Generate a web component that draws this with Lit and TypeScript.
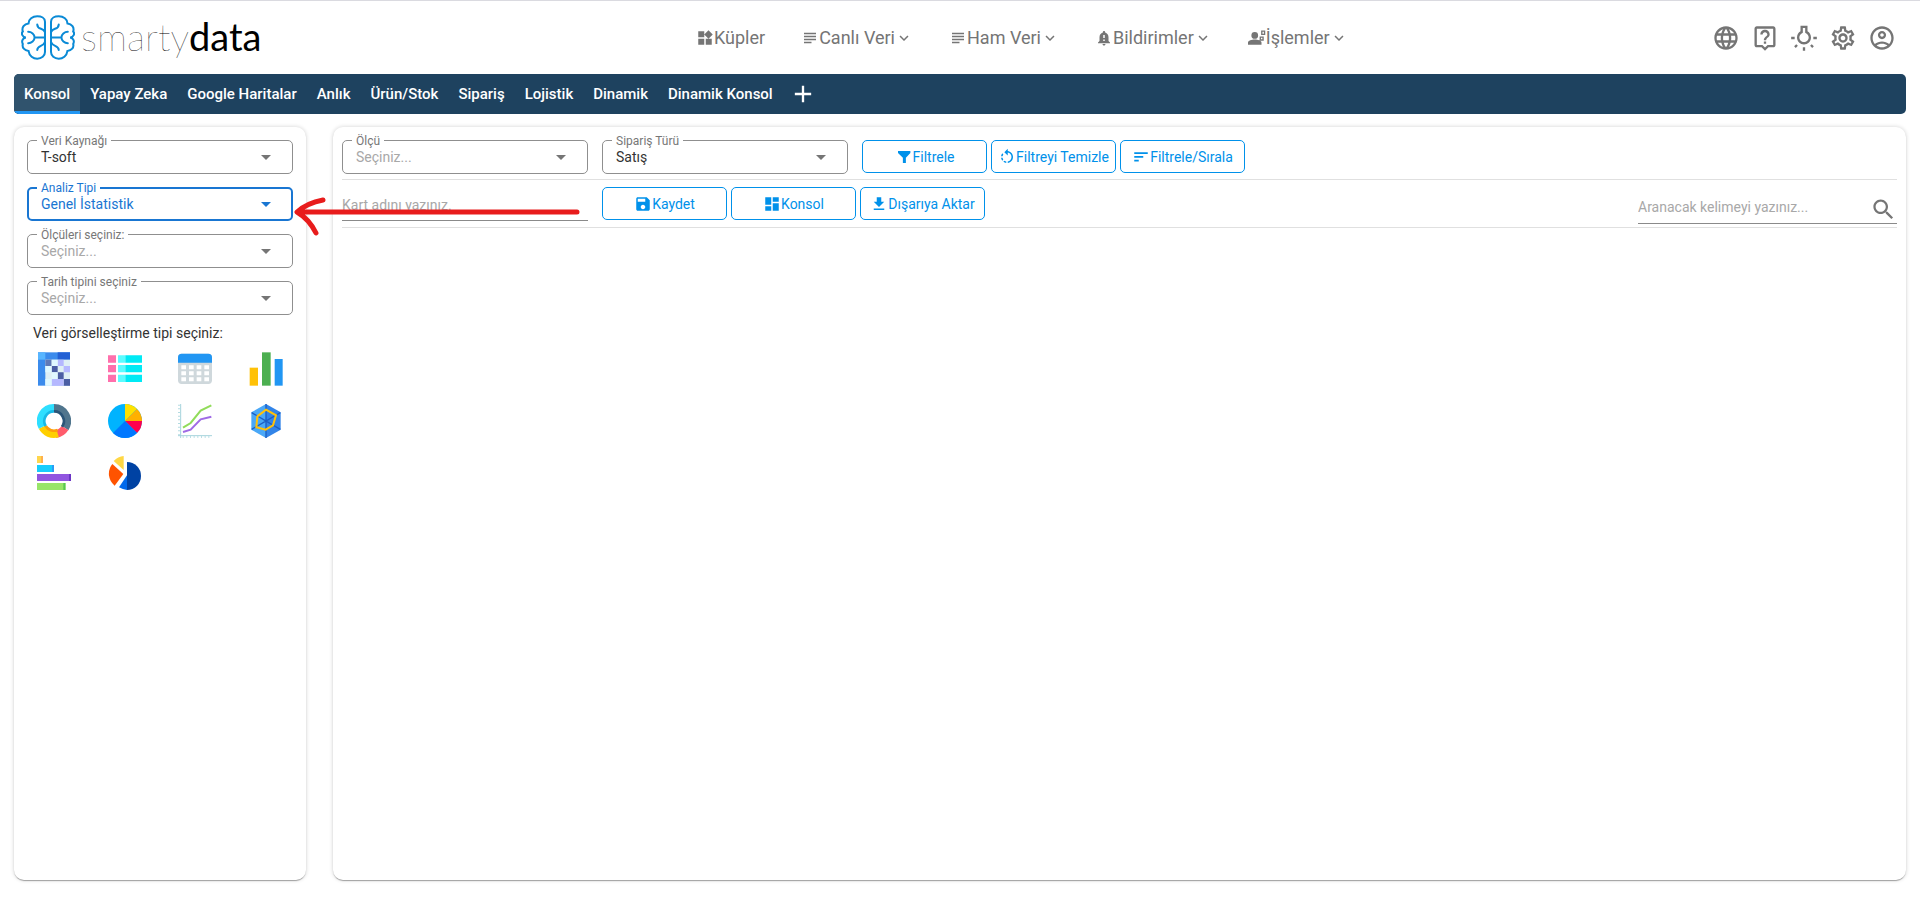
import { LitElement, html, css, svg, nothing } from "lit";
import { customElement, property, state } from "lit/decorators.js";
import { classMap } from "lit/directives/class-map.js";

const ICONS: Record<string, string> = {
  widgets: "M13 13v8h8v-8h-8zM3 21h8v-8H3v8zM3 3v8h8V3H3zm13.66-1.31L11 7.34 16.66 13l5.66-5.66-5.66-5.65z",
  subject: "M14 17H4v2h10v-2zm6-8H4v2h16V9zM4 15h16v-2H4v2zM4 5v2h16V5H4z",
  bell: "M18 16v-5c0-3.07-1.64-5.64-4.5-6.32V4c0-.83-.67-1.5-1.5-1.5s-1.5.67-1.5 1.5v.68C7.63 5.36 6 7.92 6 11v5l-2 2v1h16v-1l-2-2zm-5 0h-2v-2h2v2zm0-4h-2V8h2v4zm-1 10c1.1 0 2-.9 2-2h-4c0 1.1.89 2 2 2z",
  people: "M9 4a4.500 4.500 0 1 0 0 9 4.500 4.500 0 0 0 0-9zM0 21v-3c0-2.500 5-4 9-4s9 1.500 9 4v3zM17.500 2H23v6h-5.500zm1.800 1.800v2.400h1.900V3.800zM15.500 10H21v5.500h-5.500zm1.800 1.800v1.900h1.900v-1.900z",
  chevron: "M7.41 8.59L12 13.17l4.59-4.58L18 10l-6 6-6-6z",
  globe: "M11.99 2C6.47 2 2 6.48 2 12s4.47 10 9.99 10C17.52 22 22 17.52 22 12S17.52 2 11.99 2zm6.93 6h-2.95c-.32-1.25-.78-2.45-1.38-3.56 1.84.63 3.37 1.91 4.33 3.56zM12 4.04c.83 1.2 1.48 2.53 1.91 3.96h-3.82c.43-1.43 1.08-2.76 1.91-3.96zM4.26 14C4.1 13.36 4 12.69 4 12s.1-1.36.26-2h3.38c-.08.66-.14 1.32-.14 2 0 .68.06 1.34.14 2H4.26zm.82 2h2.95c.32 1.25.78 2.45 1.38 3.56-1.84-.63-3.37-1.9-4.33-3.56zm2.95-8H5.08c.96-1.66 2.49-2.93 4.33-3.56C8.81 5.55 8.35 6.75 8.03 8zM12 19.96c-.83-1.2-1.48-2.53-1.91-3.96h3.82c-.43 1.43-1.08 2.76-1.91 3.96zM14.34 14H9.66c-.09-.66-.16-1.32-.16-2 0-.68.07-1.35.16-2h4.68c.09.65.16 1.32.16 2 0 .68-.07 1.34-.16 2zm.25 5.56c.6-1.11 1.06-2.31 1.38-3.56h2.95c-.96 1.65-2.49 2.93-4.33 3.56zM16.36 14c.08-.66.14-1.32.14-2 0-.68-.06-1.34-.14-2h3.38c.16.64.26 1.31.26 2s-.1 1.36-.26 2h-3.38z",
  help: "M19 2H5c-1.11 0-2 .9-2 2v14c0 1.1.89 2 2 2h4l3 3 3-3h4c1.1 0 2-.9 2-2V4c0-1.1-.9-2-2-2zm0 16h-4.83l-.59.59L12 20.17l-1.59-1.59-.58-.58H5V4h14v14zm-8-3h2v2h-2zm1-8c1.1 0 2 .9 2 2 0 2-3 1.75-3 5h2c0-2.25 3-2.5 3-5 0-2.21-1.79-4-4-4S8 6.79 8 9h2c0-1.1.9-2 2-2z",
  light: "M3.55 19.09l1.41 1.41 1.79-1.8-1.41-1.41zM11 20h2v3h-2zM1 11h3v2H1zM20 11h3v2h-3zM17.24 18.71l1.79 1.8 1.41-1.41-1.8-1.79zM15 6.31V1.5H9v4.81C7.21 7.35 6 9.28 6 11.500c0 3.31 2.69 6 6 6s6-2.69 6-6c0-2.22-1.21-4.15-3-5.190zM12 15.500c-2.210 0-4-1.790-4-4 0-1.480.81-2.770 2-3.460l1-.58V3.500h2v3.960l1 .58c1.190.69 2 1.980 2 3.460 0 2.210-1.790 4-4 4z",
  settings: "M19.43 12.98c.04-.32.07-.64.07-.98 0-.34-.03-.66-.07-.98l2.11-1.65c.19-.15.24-.42.12-.64l-2-3.46c-.09-.16-.26-.25-.44-.25-.06 0-.12.01-.17.03l-2.49 1c-.52-.4-1.08-.73-1.69-.98l-.38-2.65C14.46 2.18 14.25 2 14 2h-4c-.25 0-.46.18-.49.42l-.38 2.65c-.61.25-1.17.59-1.69.98l-2.49-1c-.06-.02-.12-.03-.18-.03-.17 0-.34.09-.43.25l-2 3.46c-.13.22-.07.49.12.64l2.11 1.65c-.04.32-.07.65-.07.98 0 .33.03.66.07.98l-2.11 1.65c-.19.15-.24.42-.12.64l2 3.46c.09.16.26.25.44.25.06 0 .12-.01.17-.03l2.49-1c.52.4 1.08.73 1.69.98l.38 2.65c.03.24.24.42.49.42h4c.25 0 .46-.18.49-.42l.38-2.65c.61-.25 1.17-.59 1.69-.98l2.49 1c.06.02.12.03.18.03.17 0 .34-.09.43-.25l2-3.46c.12-.22.07-.49-.12-.64l-2.11-1.65zm-1.98-1.71c.04.31.05.52.05.73 0 .21-.02.43-.05.73l-.14 1.13.89.7 1.08.84-.7 1.21-1.27-.51-1.04-.42-.9.68c-.43.32-.84.56-1.25.73l-1.06.43-.16 1.13-.2 1.35h-1.4l-.19-1.35-.16-1.13-1.06-.43c-.43-.18-.83-.41-1.23-.71l-.91-.7-1.06.43-1.27.51-.7-1.21 1.08-.84.89-.7-.14-1.13c-.03-.31-.05-.54-.05-.74s.02-.43.05-.73l.14-1.13-.89-.7-1.08-.84.7-1.21 1.27.51 1.04.42.9-.68c.43-.32.84-.56 1.25-.73l1.06-.43.16-1.13.2-1.35h1.39l.19 1.35.16 1.13 1.06.43c.43.18.83.41 1.23.71l.91.7 1.06-.43 1.27-.51.7 1.21-1.07.85-.89.7.14 1.13zM12 8c-2.21 0-4 1.79-4 4s1.79 4 4 4 4-1.79 4-4-1.79-4-4-4zm0 6c-1.1 0-2-.9-2-2s.9-2 2-2 2 .9 2 2-.9 2-2 2z",
  account: "M12 2C6.48 2 2 6.48 2 12s4.48 10 10 10 10-4.48 10-10S17.52 2 12 2zM7.35 18.5C8.66 17.56 10.26 17 12 17s3.34.56 4.65 1.5C15.34 19.44 13.74 20 12 20s-3.34-.56-4.65-1.5zm10.79-1.38C16.45 15.8 14.32 15 12 15s-4.45.8-6.14 2.12C4.7 15.73 4 13.95 4 12c0-4.42 3.58-8 8-8s8 3.58 8 8c0 1.95-.7 3.73-1.86 5.12zM12 6c-1.93 0-3.5 1.57-3.5 3.5S10.07 13 12 13s3.5-1.57 3.5-3.5S13.93 6 12 6zm0 5c-.83 0-1.5-.67-1.5-1.5S11.17 8 12 8s1.5.67 1.5 1.5S12.83 11 12 11z",
  plus: "M19 13h-6v6h-2v-6H5v-2h6V5h2v6h6z",
  filter: "M4 4h16.500v2.500L14.500 13v7h-4v-7L4 6.500z",
  rotate: "M7.11 8.53L5.7 7.11C4.8 8.27 4.24 9.61 4.07 11h2.02c.14-.87.49-1.72 1.02-2.47zM6.09 13H4.07c.17 1.39.72 2.73 1.62 3.89l1.41-1.42c-.52-.75-.87-1.59-1.01-2.47zm1.01 5.32c1.16.9 2.51 1.44 3.9 1.61V17.9c-.87-.15-1.71-.49-2.46-1.03L7.1 18.32zM13 4.07V1L8.45 5.55 13 10V6.09c2.84.48 5 2.94 5 5.91s-2.16 5.43-5 5.91v2.02c3.95-.49 7-3.85 7-7.93s-3.05-7.44-7-7.93z",
  sort: "M3 18h6v-2.500H3zM3 5.500V8h18V5.500zm0 7.500h12v-2.500H3z",
  save: "M17 3H5c-1.11 0-2 .9-2 2v14c0 1.1.89 2 2 2h14c1.1 0 2-.9 2-2V7l-4-4zm-5 16c-1.66 0-3-1.34-3-3s1.34-3 3-3 3 1.34 3 3-1.34 3-3 3zm3-10H5V5h10v4z",
  dashboard: "M3 13h8V3H3v10zm0 8h8v-6H3v6zm10 0h8V11h-8v10zm0-18v6h8V3h-8z",
  download: "M19 9h-4V3H9v6H5l7 7 7-7zM5 18v2h14v-2H5z",
  search: "M15.5 14h-.79l-.28-.27C15.41 12.59 16 11.11 16 9.5 16 5.91 13.09 3 9.5 3S3 5.91 3 9.5 5.91 16 9.5 16c1.61 0 3.09-.59 4.23-1.57l.27.28v.79l5 4.99L20.49 19l-4.99-5zm-6 0C7.01 14 5 11.99 5 9.5S7.01 5 9.5 5 14 7.01 14 9.5 11.99 14 9.5 14z",
};

const icon = (name: string, size = 18) => html`<svg
  width=${size}
  height=${size}
  viewBox="0 0 24 24"
  fill="currentColor"
  fill-rule="evenodd"
  aria-hidden="true"
>
  <path d=${ICONS[name]} />
</svg>`;

const brainHalf = svg`
  <path d="M71 20C71 9 60 4 48 4C34 4 22 12 22 25C9 26 1 38 5 49C-1 55 4 66 14 67C3 69 1 79 5 86C2 97 10 106 22 107C24 122 36 130 48 130C61 130 71 122 71 110Z" />
  <path d="M21 50C31 50 40 58 40 67C40 76 31 84 21 84M40 67H70M48 28C48 44 66 38 70 50M48 104C48 90 66 94 70 82" />`;

/* Each picture is drawn on a 102 x 102 grid. */
const CHARTS: { label: string; art: unknown }[] = [
  {
    label: "Isı haritası",
    art: svg`
      <rect x="3" y="1" width="96" height="100" fill="#3b8bec" /><rect x="3" y="1" width="22" height="22" fill="#57b5ff" />
      <rect x="62" y="1" width="37" height="22" fill="#2360d4" /><rect x="25" y="23" width="74" height="78" fill="#dfeff5" />
      <path fill="#6079b5" d="M25 23h19v19H25z" /><path fill="#4b5ea4" d="M44 42h18v19H44zM62 61h18v20H62zM80 81h19v20H80z" />
      <path fill="#b5b8ff" d="M62 23h18v19H62zM80 42h19v19H80zM44 81h18v20H44zM62 81h18v20H62z" />
      <path fill="#e0f8ff" d="M44 23h18v19H44zM25 42h19v19H25zM44 61h18v20H44zM25 81h19v20H25z" />`,
  },
  {
    label: "Liste",
    art: svg`
      <path fill="#ff70ac" d="M0 10h24v22H0zM0 39h24v22H0zM0 68h24v22H0z" />
      <path fill="#5bfcff" d="M30 10h22v22H30zM30 39h22v22H30zM30 68h22v22H30z" />
      <path fill="#00eaf5" d="M52 10h50v22H52zM52 39h50v22H52zM52 68h50v22H52z" />`,
  },
  {
    label: "Tablo",
    art: svg`
      <rect y="5" width="102" height="91" rx="11" fill="#cfd8dc" /><path fill="#2196f3" d="M0 32V16Q0 5 11 5H91Q102 5 102 16V32z" />
      <path fill="#fff" d="M10 40h14v12H10zM33 40h14v12H33zM56 40h14v12H56zM79 40h14v12H79zM10 58h14v12H10zM33 58h14v12H33zM56 58h14v12H56zM79 58h14v12H79zM10 76h14v12H10zM33 76h14v12H33zM56 76h14v12H56zM79 76h14v12H79z" />`,
  },
  {
    label: "Sütun grafik",
    art: svg`<path fill="#ffc107" d="M2 47h25v54H2z" /><path fill="#4caf50" d="M39 1h26v100H39z" /><path fill="#2196f3" d="M77 21h24v80H77z" />`,
  },
  {
    label: "Halka grafik",
    art: svg`
      <g fill="none" stroke-width="24">
        <path stroke="#50758d" d="M51 12A39 39 0 0 1 84 72" /><path stroke="#ff5c6c" d="M84 72A39 39 0 0 1 56 90" />
        <path stroke="#ffcf00" d="M62 88A39 39 0 0 1 16 69" /><path stroke="#2edfff" d="M16 69A39 39 0 0 1 51 12" />
      </g>
      <g fill="none" stroke-width="8">
        <path stroke="#2b5578" d="M51 22A29 29 0 0 1 75 68" /><path stroke="#ff9d0a" d="M62 78A29 29 0 0 1 26 66" />
        <path stroke="#18b9e6" d="M26 66A29 29 0 0 1 51 22" />
      </g>`,
  },
  {
    label: "Pasta grafik",
    art: svg`
      <circle cx="51" cy="51" r="51" fill="#00b3fe" /><path fill="#ffe100" d="M51 51V0A51 51 0 0 1 87 15z" />
      <path fill="#ffb000" d="M51 51L87 15A51 51 0 0 1 102 51z" /><path fill="#ff004d" d="M51 51H102A51 51 0 0 1 87 87z" />
      <path fill="#0078ff" d="M51 51L87 87A51 51 0 0 1 15 87z" />`,
  },
  {
    label: "Çizgi grafik",
    art: svg`
      <g fill="none">
        <path stroke="#a5d4dc" stroke-width="3" d="M8 0V102M0 95H102" />
        <path stroke="#a5d4dc" stroke-width="5" stroke-dasharray="3 8" d="M3 2V92M14 99H102" />
        <path stroke="#91dc5a" stroke-width="6" d="M15 71L38 57 68 20 100 4" /><path stroke="#a06be5" stroke-width="6" d="M15 84L38 77 68 46 100 38" />
      </g>`,
  },
  {
    label: "Radar grafik",
    art: svg`
      <path fill="#4aa8f7" d="M51 0L7 25V77L51 102z" /><path fill="#3284e8" d="M51 0L95 25V77L51 102z" />
      <path fill="none" stroke="#1d5fc4" stroke-width="4" d="M51 0V102M8 76L94 26M8 26L94 76" />
      <path fill="none" stroke="#ffc10a" stroke-width="6" d="M51 17L81 34 72 64 50 77 22 70 25 37z" />`,
  },
  {
    label: "Çubuk grafik",
    art: svg`
      <path fill="#ffd64d" d="M0 0h18v21H0z" /><path fill="#ffb04d" d="M12 0h6v21h-6z" />
      <path fill="#17cdfc" d="M0 27h51v21H0z" /><path fill="#2a9cf5" d="M45 27h6v21h-6z" />
      <path fill="#9155e0" d="M0 54h102v21H0z" /><path fill="#6b35c4" d="M96 54h6v21h-6z" />
      <path fill="#98e569" d="M0 81h86v21H0z" /><path fill="#59c954" d="M79 81h6v21h-6z" />`,
  },
  {
    label: "Ayrık pasta grafik",
    art: svg`
      <path fill="#ffd744" d="M47 42V0Q30 1 17 15z" /><path fill="#ff5300" d="M46 54L13 24A46 46 0 0 0 20 89z" />
      <path fill="#0042a3" d="M57 18A42 42 0 0 1 57 102z" /><path fill="#0069ec" d="M57 58V102Q44 101 33 94z" />`,
  },
];

const baseStyles = css`
  *,
  *::before,
  *::after {
    box-sizing: border-box;
  }
  svg {
    display: block;
    flex: none;
  }
  button,
  input,
  select {
    font: inherit;
    color: inherit;
    background: none;
    border: 0;
    margin: 0;
    padding: 0;
  }
  button {
    cursor: pointer;
  }
`;

@customElement("outlined-select")
class OutlinedSelect extends LitElement {
  @property() label = "";
  @property() value = "";
  @property({ type: Boolean }) placeholder = false;
  @property({ type: Boolean, reflect: true }) active = false;

  static styles = [
    baseStyles,
    css`
      :host {
        display: block;
        position: relative;
        height: 34px;
        color: #333;
      }
      .box {
        appearance: none;
        width: 100%;
        height: 100%;
        padding: 0 36px 0 13px;
        border: 1px solid #8f8f8f;
        border-radius: 5px;
        font-size: 14px;
        line-height: 24px;
        outline: none;
      }
      .box.empty {
        color: #a8a8a8;
      }
      label {
        position: absolute;
        left: 10px;
        top: -6px;
        padding: 0 4px;
        background: #fff;
        color: #777;
        font-size: 12px;
        line-height: 14px;
      }
      .arrow {
        position: absolute;
        right: 22px;
        top: 15px;
        color: #757575;
        pointer-events: none;
      }
      :host([active]) .box {
        border: 2px solid #1976d2;
        padding-left: 12px;
        color: #1976d2;
      }
      :host([active]) label,
      :host([active]) .arrow {
        color: #1976d2;
      }
    `,
  ];

  render() {
    return html`
      <select id="field" class=${classMap({ box: true, empty: this.placeholder })}>
        <option>${this.value}</option>
      </select>
      <label for="field">${this.label}</label>
      <svg class="arrow" width="10" height="5" viewBox="0 0 10 5" fill="currentColor" aria-hidden="true"><path d="M0 0h10L5 5z" /></svg>
    `;
  }
}

@customElement("app-root")
class AppRoot extends LitElement {
  @state() private tab = "Konsol";

  private menu = [
    { text: "Küpler", icon: "widgets", more: false },
    { text: "Canlı Veri", icon: "subject", more: true },
    { text: "Ham Veri", icon: "subject", more: true },
    { text: "Bildirimler", icon: "bell", more: true },
    { text: "İşlemler", icon: "people", more: true },
  ];

  private actions = [
    { label: "Dil", icon: "globe" },
    { label: "Yardım", icon: "help" },
    { label: "Tema", icon: "light" },
    { label: "Ayarlar", icon: "settings" },
    { label: "Hesap", icon: "account" },
  ];

  private tabs = ["Konsol", "Yapay Zeka", "Google Haritalar", "Anlık", "Ürün/Stok", "Sipariş", "Lojistik", "Dinamik", "Dinamik Konsol"];

  static styles = [
    baseStyles,
    css`
      :host {
        display: block;
        min-height: 100vh;
        padding: 0 14px 40px;
        background: #fff;
        border-top: 1px solid #dadae0;
        box-sizing: border-box;
        font-family: Roboto, "Liberation Sans", sans-serif;
        font-size: 14px;
        line-height: 20px;
        color: #333;
      }
      .header {
        display: flex;
        align-items: center;
        height: 73px;
        padding: 0 10px 0 7px;
        color: #757575;
      }
      .logo {
        display: flex;
        align-items: center;
        gap: 6px;
        width: 36%;
        color: #000;
        text-decoration: none;
        font-family: Lato, sans-serif;
        font-size: 38px;
        line-height: 44px;
        font-weight: 200;
      }
      .wordmark {
        padding-bottom: 4px;
      }
      .wordmark strong {
        font-weight: 400;
      }
      .menu {
        display: flex;
        gap: 36px;
        font-size: 18px;
        line-height: 24px;
      }
      .menu button {
        display: flex;
        align-items: center;
      }
      .actions {
        display: flex;
        gap: 11px;
        margin-left: auto;
      }
      .tabs {
        display: flex;
        height: 40px;
        background: #1e425f;
        border-radius: 5px;
        overflow: hidden;
        color: #fff;
        font-size: 15px;
        font-weight: 500;
      }
      .tab {
        padding: 2px 10px 0;
        border-bottom: 3px solid transparent;
      }
      .tab.current {
        background: #30536d;
        border-bottom-color: #2196f3;
      }
      .tabs .add {
        padding: 0 6px;
      }
      .main {
        position: relative;
        display: grid;
        grid-template-columns: 292px minmax(0, 1fr);
        gap: 27px;
        margin-top: 13px;
        min-height: calc(100vh - 167px);
      }
      .card {
        border-radius: 10px;
        background: #fff;
        box-shadow: 0 2px 1px -1px rgba(0, 0, 0, 0.2), 0 1px 1px rgba(0, 0, 0, 0.14), 0 0 4px rgba(0, 0, 0, 0.18);
      }
      .side {
        padding: 13px 5px;
      }
      .fields {
        display: grid;
        gap: 13px;
        padding: 0 8px;
      }
      .caption {
        margin: 8px 14px 9px;
        font-weight: 400;
        font-size: 14px;
        line-height: 20px;
      }
      .charts {
        display: grid;
        grid-template-columns: repeat(4, 1fr);
        gap: 18px 0;
        justify-items: center;
      }
      .content {
        padding: 13px 9px;
      }
      .row {
        display: flex;
        align-items: flex-start;
        gap: 14px;
        border-bottom: 1px solid #e0e0e0;
      }
      .row.first {
        padding-bottom: 5px;
      }
      .row.second {
        padding: 7px 0 3px;
      }
      .field {
        width: 246px;
      }
      .buttons {
        display: flex;
        gap: 4px;
      }
      .outlined {
        display: flex;
        align-items: center;
        justify-content: center;
        width: 125px;
        height: 33px;
        border: 1px solid #0091ea;
        border-radius: 5px;
        color: #0091ea;
      }
      .line {
        border-bottom: 1px solid #8a8a8a;
        height: 34px;
        padding-top: 2px;
        outline: none;
      }
      .search {
        display: flex;
        align-items: center;
        width: 259px;
        height: 37px;
        margin-left: auto;
        border-bottom: 1px solid #8a8a8a;
        padding-top: 8px;
        color: #757575;
      }
      .search input {
        flex: 1;
        min-width: 0;
        padding-bottom: 5px;
        outline: none;
      }
      ::placeholder {
        color: #a8a8a8;
        opacity: 1;
      }
      .pointer {
        position: absolute;
        left: 280px;
        top: 68px;
        pointer-events: none;
      }
    `,
  ];

  private button(name: string, text: string) {
    return html`<button class="outlined">${icon(name)}${text}</button>`;
  }

  render() {
    return html`
      <header class="header">
        <a class="logo" href="#">
          <svg width="54" height="45" viewBox="0 0 160 134" fill="none" stroke="#0a8ad6" stroke-width="6" stroke-linecap="round" aria-hidden="true">
            <g>${brainHalf}</g>
            <g transform="matrix(-1 0 0 1 160 0)">${brainHalf}</g>
          </svg>
          <span class="wordmark">smarty<strong>data</strong></span>
        </a>
        <nav class="menu">
          ${this.menu.map((m) => html`<button>${icon(m.icon)}${m.text}${m.more ? icon("chevron") : nothing}</button>`)}
        </nav>
        <div class="actions">
          ${this.actions.map((a) => html`<button aria-label=${a.label}>${icon(a.icon, 28)}</button>`)}
        </div>
      </header>
      <nav class="tabs">
        ${this.tabs.map(
          (t) => html`<button class=${classMap({ tab: true, current: t === this.tab })} @click=${() => (this.tab = t)}>${t}</button>`
        )}
        <button class="add" aria-label="Sekme ekle">${icon("plus", 28)}</button>
      </nav>
      <main class="main">
        <aside class="card side">
          <div class="fields">
            <outlined-select label="Veri Kaynağı" value="T-soft"></outlined-select>
            <outlined-select label="Analiz Tipi" value="Genel İstatistik" active></outlined-select>
            <outlined-select label="Ölçüleri seçiniz:" value="Seçiniz..." placeholder></outlined-select>
            <outlined-select label="Tarih tipini seçiniz" value="Seçiniz..." placeholder></outlined-select>
          </div>
          <h2 class="caption">Veri görselleştirme tipi seçiniz:</h2>
          <div class="charts">
            ${CHARTS.map(
              (c) => html`<button aria-label=${c.label}><svg width="34" height="34" viewBox="0 0 102 102" aria-hidden="true">${c.art}</svg></button>`
            )}
          </div>
        </aside>
        <section class="card content">
          <div class="row first">
            <outlined-select class="field" label="Ölçü" value="Seçiniz..." placeholder></outlined-select>
            <outlined-select class="field" label="Sipariş Türü" value="Satış"></outlined-select>
            <div class="buttons">
              ${this.button("filter", "Filtrele")}${this.button("rotate", "Filtreyi Temizle")}${this.button("sort", "Filtrele/Sırala")}
            </div>
          </div>
          <div class="row second">
            <input class="field line" aria-label="Kart adı" placeholder="Kart adını yazınız." />
            <div class="buttons">
              ${this.button("save", "Kaydet")}${this.button("dashboard", "Konsol")}${this.button("download", "Dışarıya Aktar")}
            </div>
            <div class="search">
              <input type="text" aria-label="Ara" placeholder="Aranacak kelimeyi yazınız..." />
              <button aria-label="Ara">${icon("search", 27)}</button>
            </div>
          </div>
        </section>
        <svg class="pointer" width="290" height="44" viewBox="0 0 290 44" fill="none" stroke="#e81c1c" stroke-width="5" stroke-linecap="round" stroke-linejoin="round" aria-hidden="true">
          <path d="M19 17H297M43 5Q27 8 17 17Q29 24 36 38" transform="translate(-14 0)" />
        </svg>
      </main>
    `;
  }
}
